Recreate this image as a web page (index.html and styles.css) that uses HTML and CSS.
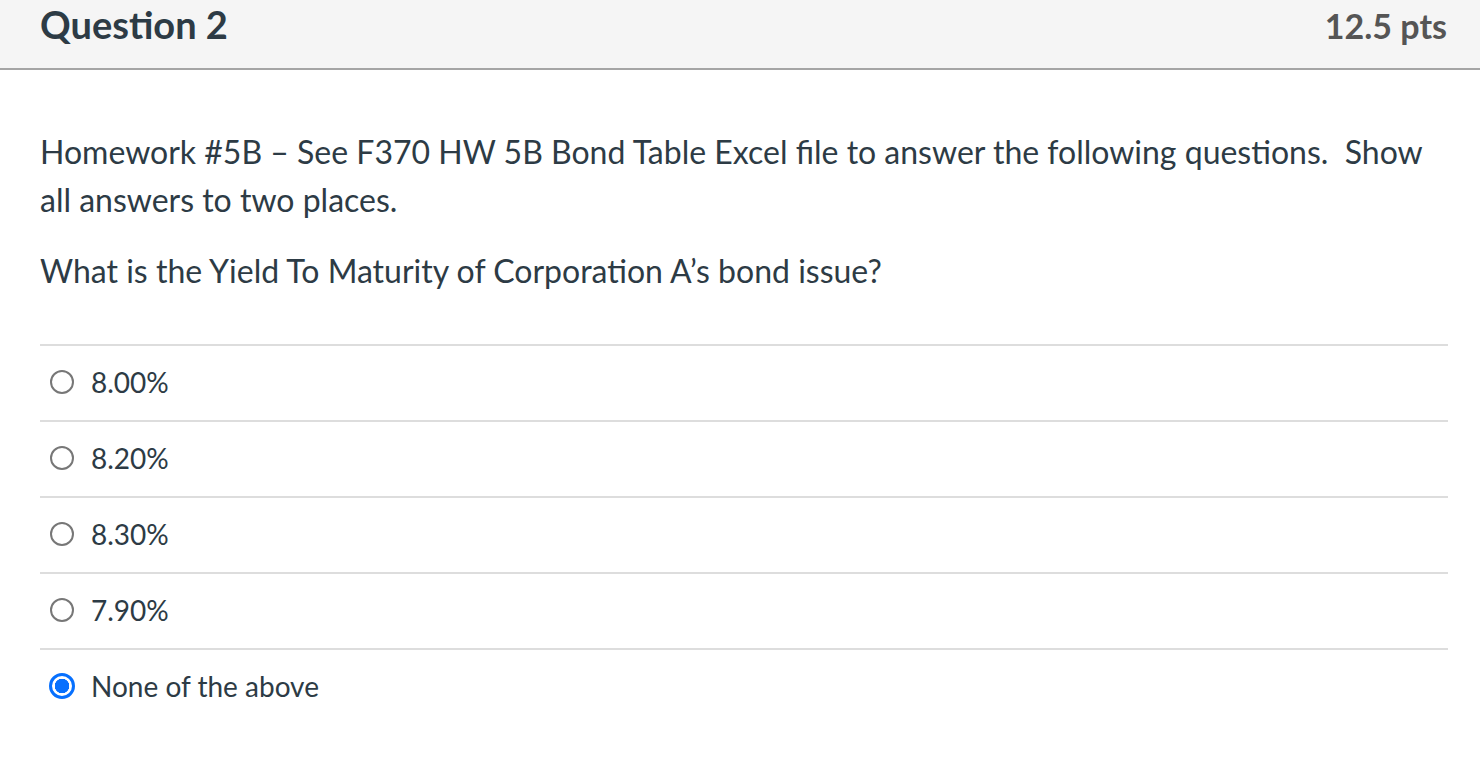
FILE: index.html
```html
<!DOCTYPE html>
<html>
<head>
<meta charset="utf-8">
<link rel="stylesheet" href="styles.css">
</head>
<body>
<div class="question">
  <div class="header">
    <h2 class="title">Question 2</h2>
    <div class="pts">12.5 pts</div>
  </div>
  <div class="content">
    <p class="text">Homework #5B – See F370 HW 5B Bond Table Excel file to answer the following questions.&nbsp; Show all answers to two places.</p>
    <p class="text">What is the Yield To Maturity of Corporation A’s bond issue?</p>
    <div class="answers">
      <div class="answer"><span class="radio"></span><span class="label">8.00%</span></div>
      <div class="answer"><span class="radio"></span><span class="label">8.20%</span></div>
      <div class="answer"><span class="radio"></span><span class="label">8.30%</span></div>
      <div class="answer"><span class="radio"></span><span class="label">7.90%</span></div>
      <div class="answer"><span class="radio checked"></span><span class="label">None of the above</span></div>
    </div>
  </div>
</div>
</body>
</html>
```
FILE: styles.css
```css
html, body {
  margin: 0;
  padding: 0;
  background: #fff;
}
body {
  font-family: Lato, "Open Sans", sans-serif;
  color: #2d3b45;
  width: 1480px;
  height: 758px;
  overflow: hidden;
}
.header {
  display: flex;
  justify-content: space-between;
  align-items: center;
  height: 68px;
  background: #f5f5f5;
  border-bottom: 2px solid #a5a5a5;
  padding: 0 33px 0 40px;
}
.title {
  margin: 0;
  font-size: 38px;
  font-weight: 700;
  line-height: 48px;
  position: relative;
  top: -10px;
}
.pts {
  font-size: 34px;
  font-weight: 700;
  color: #555;
  position: relative;
  top: -9px;
}
.content {
  padding: 58px 32px 0 40px;
}
.text {
  margin: 0 0 23px 0;
  font-size: 32px;
  line-height: 48px;
}
.answers {
  margin-top: 49px;
}
.answer {
  display: flex;
  align-items: center;
  height: 74px;
  padding-bottom: 3px;
  box-sizing: border-box;
  height: 76px;
  border-top: 2px solid #dddddd;
}
.radio {
  width: 24px;
  height: 24px;
  border: 2px solid #777;
  border-radius: 50%;
  margin-left: 10px;
  margin-right: 17px;
  box-sizing: border-box;
  flex: none;
}
.radio.checked {
  width: 26px;
  height: 26px;
  margin-left: 9px;
  margin-right: 16px;
  border: 3px solid #0770fe;
  background: radial-gradient(circle, #0770fe 0 7px, #fff 7.5px);
}
.label {
  font-size: 28px;
  line-height: 32px;
}
```
